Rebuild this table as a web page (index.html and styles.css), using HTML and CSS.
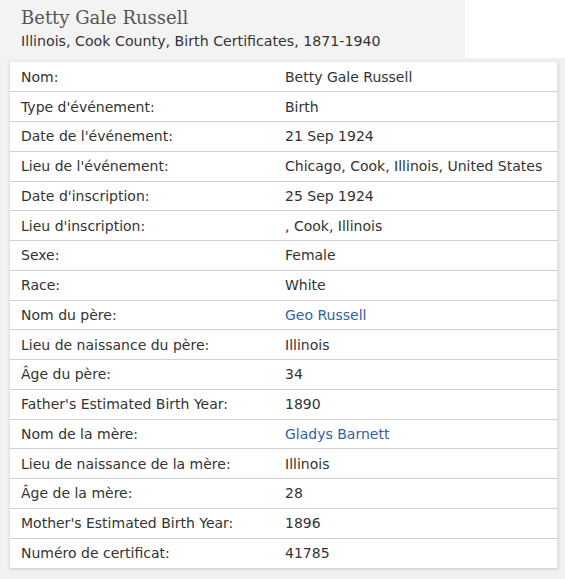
FILE: index.html
```html
<!DOCTYPE html>
<html>
<head>
<meta charset="utf-8">
<link rel="stylesheet" href="styles.css">
</head>
<body>
<div class="page">
  <div class="header">
    <div class="title">Betty Gale Russell</div>
    <div class="subtitle">Illinois, Cook County, Birth Certificates, 1871-1940</div>
  </div>
  <div class="content">
    <table class="card">
      <tr><td class="label">Nom:</td><td class="value">Betty Gale Russell</td></tr>
      <tr><td class="label">Type d'événement:</td><td class="value">Birth</td></tr>
      <tr><td class="label">Date de l'événement:</td><td class="value">21 Sep 1924</td></tr>
      <tr><td class="label">Lieu de l'événement:</td><td class="value">Chicago, Cook, Illinois, United States</td></tr>
      <tr><td class="label">Date d'inscription:</td><td class="value">25 Sep 1924</td></tr>
      <tr><td class="label">Lieu d'inscription:</td><td class="value">, Cook, Illinois</td></tr>
      <tr><td class="label">Sexe:</td><td class="value">Female</td></tr>
      <tr><td class="label">Race:</td><td class="value">White</td></tr>
      <tr><td class="label">Nom du père:</td><td class="value"><a class="link" href="#">Geo Russell</a></td></tr>
      <tr><td class="label">Lieu de naissance du père:</td><td class="value">Illinois</td></tr>
      <tr><td class="label">Âge du père:</td><td class="value">34</td></tr>
      <tr><td class="label">Father's Estimated Birth Year:</td><td class="value">1890</td></tr>
      <tr><td class="label">Nom de la mère:</td><td class="value"><a class="link" href="#">Gladys Barnett</a></td></tr>
      <tr><td class="label">Lieu de naissance de la mère:</td><td class="value">Illinois</td></tr>
      <tr><td class="label">Âge de la mère:</td><td class="value">28</td></tr>
      <tr><td class="label">Mother's Estimated Birth Year:</td><td class="value">1896</td></tr>
      <tr><td class="label">Numéro de certificat:</td><td class="value">41785</td></tr>
    </table>
  </div>
</div>
</body>
</html>
```
FILE: styles.css
```css
html, body {
  margin: 0;
  padding: 0;
  background: #ffffff;
}
.page {
  width: 565px;
  height: 579px;
  overflow: hidden;
  font-family: "DejaVu Sans", Verdana, sans-serif;
  color: #333333;
}
.header {
  width: 465px;
  height: 58px;
  box-sizing: border-box;
  background: #f3f3f3;
  padding: 7px 0 0 21px;
}
.title {
  font-family: "DejaVu Serif", Georgia, serif;
  font-size: 18px;
  line-height: 22px;
  color: #555555;
}
.subtitle {
  font-size: 14.2px;
  line-height: 20px;
  color: #333333;
  margin-top: 2px;
}
.content {
  background: #f1f1f1;
  padding: 4px 8px 20px 10px;
  height: 521px;
  box-sizing: border-box;
}
.card {
  width: 548px;
  border-collapse: collapse;
  background: #ffffff;
  box-shadow: 0 1px 3px rgba(0,0,0,0.18);
  border-right: 1px solid #e6e6e6;
}
.card td {
  height: 29.75px;
  padding: 0;
  font-size: 14px;
  border-bottom: 1px solid #d2d2d2;
  vertical-align: middle;
  box-sizing: border-box;
  white-space: nowrap;
}
.card tr:last-child td {
  border-bottom: none;
}
.label {
  padding-left: 11px !important;
  width: 275px;
}
.value {
  color: #333333;
}
.link {
  color: #2f63a6;
  text-decoration: none;
}
```
